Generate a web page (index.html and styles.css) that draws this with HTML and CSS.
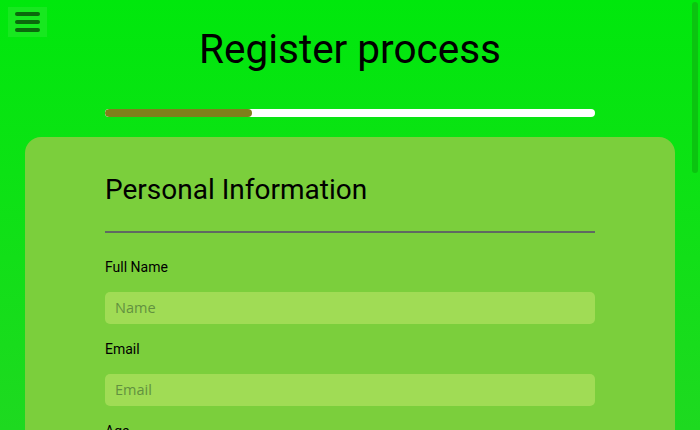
FILE: index.html
```html
<!DOCTYPE html>
<html lang="en">
<head>
<meta charset="utf-8">
<title>Register process</title>
<link rel="stylesheet" href="styles.css">
</head>
<body>
<div class="scroll-thumb"></div>
<header class="header">
  <button class="menu" aria-label="Menu">
    <span class="bar"></span><span class="bar"></span><span class="bar"></span>
  </button>
  <h1 class="title">Register process</h1>
</header>
<div class="progress"><div class="progress-fill" style="width:30%"></div></div>
<main class="card">
  <h2 class="card-title">Personal Information</h2>
  <hr class="divider">
  <form class="form">
    <label class="field"><span class="label">Full Name</span><input class="input" type="text" placeholder="Name"></label>
    <label class="field"><span class="label">Email</span><input class="input" type="email" placeholder="Email"></label>
    <label class="field"><span class="label">Age</span><input class="input" type="number" placeholder="Age"></label>
    <label class="field"><span class="label">Phone</span><input class="input" type="tel" placeholder="Phone"></label>
    <label class="field"><span class="label">Address</span><input class="input" type="text" placeholder="Address"></label>
    <label class="field"><span class="label">City</span><input class="input" type="text" placeholder="City"></label>
    <label class="field"><span class="label">Country</span><input class="input" type="text" placeholder="Country"></label>
  </form>
</main>
</body>
</html>
```
FILE: styles.css
```css
html {
  scrollbar-width: none;
  background: linear-gradient(180deg, #00e80c 0px, #1ed920 430px, #30cc30 1100px);
}
html::-webkit-scrollbar { display: none; }
body {
  margin: 0;
  font-family: Roboto, "Liberation Sans", sans-serif;
  color: #000;
  padding-bottom: 60px;
}
.scroll-thumb {
  position: fixed;
  top: 2px;
  right: 2px;
  width: 6px;
  height: 171px;
  border-radius: 3px;
  background: #0bc410;
}
.header {
  display: grid;
  grid-template-columns: 1fr auto 1fr;
  align-items: start;
  padding: 7px 8px 0;
}
.menu {
  justify-self: start;
  width: 39px;
  height: 30px;
  border: 0;
  padding: 0;
  background: #17e81f;
  display: flex;
  flex-direction: column;
  align-items: center;
  justify-content: center;
  gap: 4px;
  cursor: pointer;
}
.bar {
  display: block;
  width: 25px;
  height: 4px;
  border-radius: 2px;
  background: #0a6a0c;
}
.title {
  margin: 22px 0 0;
  font-size: 40.5px;
  font-weight: 400;
  line-height: 41px;
}
.progress {
  margin: 39px auto 0;
  width: 490px;
  height: 8px;
  border-radius: 4px;
  background: #fff;
  overflow: hidden;
}
.progress-fill {
  height: 100%;
  border-radius: 4px;
  background: #7f801b;
}
.card {
  margin: 20px 25px 0;
  padding: 36px 80px 40px;
  background: #7bcf3c;
  border-radius: 16px;
}
.card-title {
  margin: 0;
  font-size: 28px;
  font-weight: 400;
  line-height: 1.2;
}
.divider {
  margin: 24px 0 0;
  border: 0;
  height: 2px;
  background: #5f6a62;
}
.form {
  display: flex;
  flex-direction: column;
}
.field {
  display: flex;
  flex-direction: column;
}
.label {
  margin-top: 26px;
  font-size: 14px;
  line-height: 16px;
}
.input {
  margin-top: 17px;
  height: 32px;
  box-sizing: border-box;
  border: 0;
  border-radius: 5px;
  padding: 0 10px;
  background: #a0dc55;
  font-family: "Open Sans", "DejaVu Sans", sans-serif;
  font-size: 14.5px;
  outline: none;
}
.input::placeholder { color: #62913f; }
.field + .field .label { margin-top: 17px; }
```
